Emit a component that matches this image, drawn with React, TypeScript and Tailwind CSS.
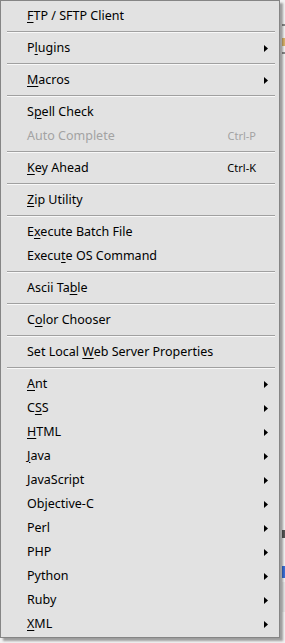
import React from "react";

type Item =
  | { sep: true }
  | { sep?: false; label: string; u?: number; sub?: boolean; key?: string; disabled?: boolean };

const items: Item[] = [
  { label: "FTP / SFTP Client", u: 0 },
  { sep: true },
  { label: "Plugins", u: 1, sub: true },
  { sep: true },
  { label: "Macros", u: 0, sub: true },
  { sep: true },
  { label: "Spell Check", u: 1 },
  { label: "Auto Complete", key: "Ctrl-P", disabled: true },
  { sep: true },
  { label: "Key Ahead", u: 0, key: "Ctrl-K" },
  { sep: true },
  { label: "Zip Utility", u: 0 },
  { sep: true },
  { label: "Execute Batch File", u: 1 },
  { label: "Execute OS Command", u: 5 },
  { sep: true },
  { label: "Ascii Table", u: 8 },
  { sep: true },
  { label: "Color Chooser", u: 1 },
  { sep: true },
  { label: "Set Local Web Server Properties", u: 10 },
  { sep: true },
  { label: "Ant", u: 0, sub: true },
  { label: "CSS", u: 1, sub: true },
  { label: "HTML", u: 0, sub: true },
  { label: "Java", u: 0, sub: true },
  { label: "JavaScript", sub: true },
  { label: "Objective-C", sub: true },
  { label: "Perl", sub: true },
  { label: "PHP", sub: true },
  { label: "Python", sub: true },
  { label: "Ruby", sub: true },
  { label: "XML", u: 0, sub: true },
];

function Label({ text, u }: { text: string; u?: number }) {
  if (u === undefined) return <span className="flex-1">{text}</span>;
  return (
    <span className="flex-1">
      {text.slice(0, u)}
      <span className="underline underline-offset-[2px]">{text[u]}</span>
      {text.slice(u + 1)}
    </span>
  );
}

function Arrow() {
  return (
    <svg width="4" height="7" viewBox="0 0 4 7" className="block">
      <path d="M0 0 L4 3.5 L0 7 Z" fill="#000" />
    </svg>
  );
}

export default function App() {
  return (
    <div
      className="relative w-[285px] h-[643px] bg-[#f2f2f2] overflow-hidden"
      style={{ fontFamily: '"Noto Sans", "Liberation Sans", sans-serif' }}
    >
      {/* underlying window fragments peeking out at the right edge */}
      <div className="absolute left-[282px] top-0 w-[3px] h-full flex flex-col">
        <div className="h-[24px]" />
        <div className="h-[2px] bg-[#8a8a8a]" />
        <div className="h-[12px]" />
        <div className="h-[8px] bg-[#d9b36a]" />
        <div className="h-[6px]" />
        <div className="h-[2px] bg-[#8a8a8a]" />
        <div className="h-[476px]" />
        <div className="h-[8px] bg-[#555]" />
        <div className="h-[28px]" />
        <div className="h-[12px] bg-[#3a6fd8]" />
        <div className="h-[4px]" />
        <div className="h-[30px] bg-[#e6e6e6]" />
      </div>

      <div className="relative w-[280px] h-[638px] bg-[#e2e2e2] border border-[#858585] pt-[3px] shadow-[3px_3px_2px_rgba(0,0,0,0.35)] text-[12.5px] text-black">
        {items.map((it, i) =>
          it.sep ? (
            <div key={i} className="h-[8px] flex flex-col justify-center pl-[6px] pr-[4px]">
              <div className="h-[1px] bg-[#a0a0a0]" />
              <div className="h-[1px] bg-[#f8f8f8]" />
            </div>
          ) : (
            <div
              key={i}
              className={`h-[24px] flex items-center pl-[26px] pr-[11px] ${it.disabled ? "text-[#a3a3a3]" : ""}`}
            >
              <Label text={it.label} u={it.u} />
              {it.key && <span className="mr-[8px] text-[11px]">{it.key}</span>}
              <span className="w-[4px] flex items-center">{it.sub && <Arrow />}</span>
            </div>
          )
        )}
      </div>
    </div>
  );
}
